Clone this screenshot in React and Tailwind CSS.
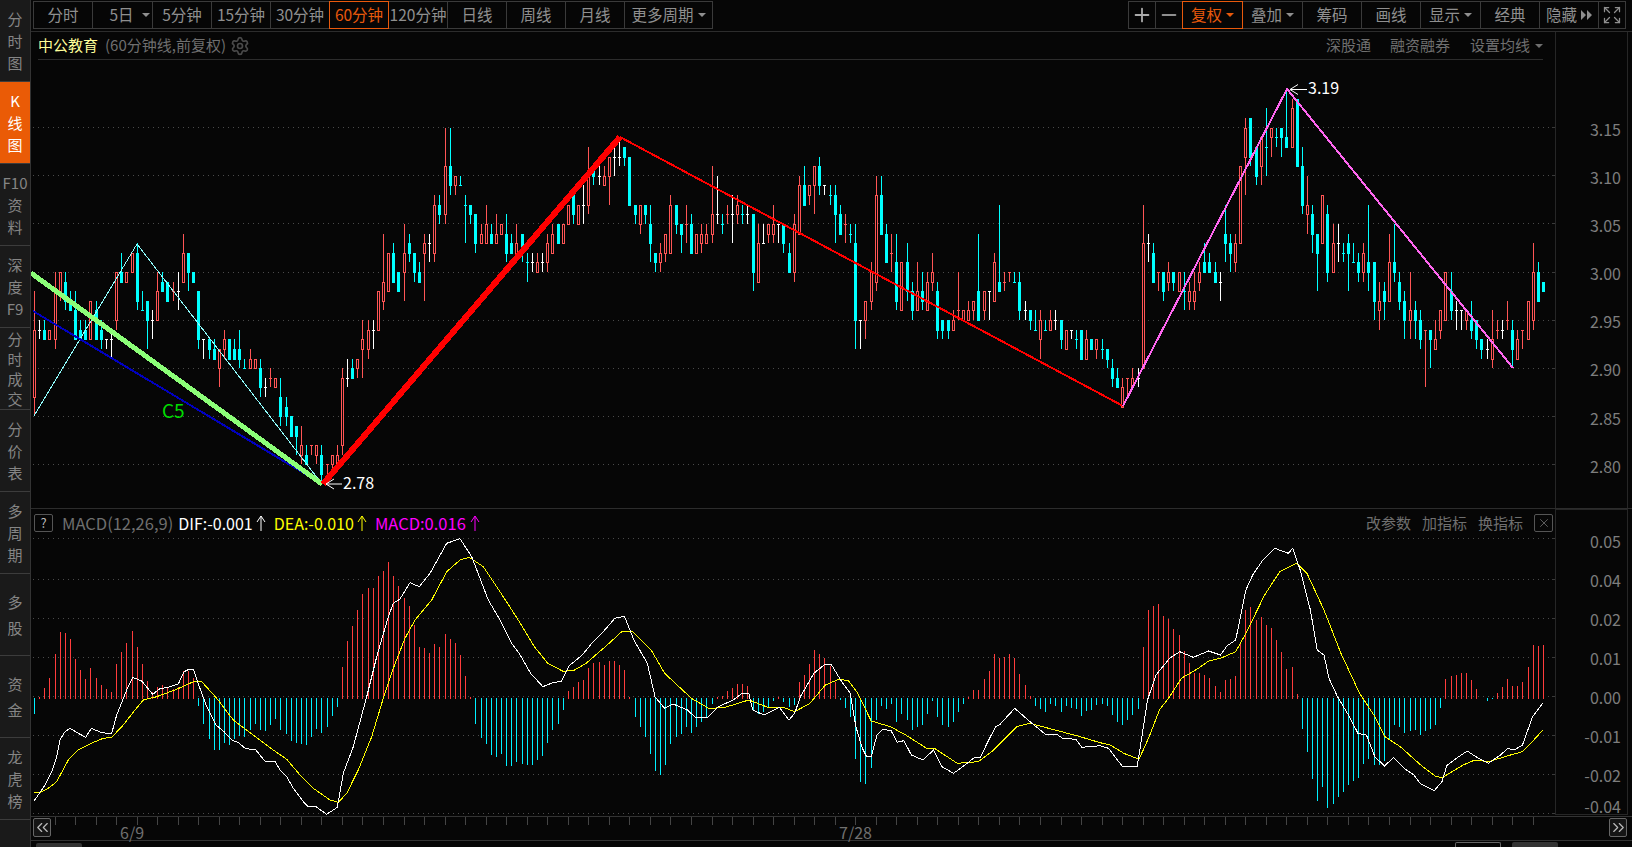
import React from "react";
import { Plus, Minus, Settings, Expand, ChevronsLeft, ChevronsRight, X } from "lucide-react";

const CANDLES = `r298,294,287,285 w295,294,294,293 c295,294,293,293 r294,294,293,293 r300,298,293,292 r300,300,298,297 c300,299,297,296 c298,297,296,296 c298,296,293,293 c295,294,293,293
c295,294,293,293 r297,297,293,293 c297,296,293,293 c295,294,293,292 w293,293,293,292 w294,293,293,291 r300,300,295,294 c302,300,299,299 r300,300,299,299 r302,302,300,300
c303,302,297,296 c298,296,296,296 c297,297,295,292 w296,295,295,293 r300,298,295,295 c300,299,298,298 c299,299,297,297 r299,298,298,297 w300,298,298,296 r304,302,299,299
c302,302,300,298 c300,300,299,299 c298,298,293,292 w293,293,293,291 c293,293,292,291 c293,292,291,291 r292,292,290,288 r294,293,292,291 c293,293,291,291 c293,292,291,291
c294,292,291,290 c291,290,290,290 r292,291,290,290 r291,291,290,290 c291,290,288,287 w289,288,288,287 r290,289,289,288 r289,289,288,288 c289,287,285,284 c287,286,285,284
c285,285,283,283 c284,284,283,281 r284,282,281,280 c282,281,280,280 r282,282,282,281 r282,282,281,280 c282,281,279,278 r280,280,280,279 r281,281,280,279 r282,281,280,280
r290,289,282,281 w291,289,289,288 c291,290,289,289 r291,291,290,289 r295,293,292,289 r295,294,292,291 w295,294,294,292 r298,298,294,294 r304,299,297,296 r302,302,298,298
c303,302,299,299 c300,300,298,298 r305,302,300,297 c304,303,302,301 c302,302,300,299 c301,300,299,299 r304,303,302,297 w304,303,303,301 r308,307,302,301 c308,307,306,305
r315,311,306,305 c315,311,309,308 r310,310,309,308 c310,309,309,309 c308,307,307,303 c307,307,306,305 c306,306,303,302 r305,304,303,303 r307,305,303,303 c305,304,303,303
r306,304,303,303 r305,305,304,304 c306,304,302,301 c304,303,302,302 r305,303,302,301 c304,304,302,301 c302,301,301,299 w302,301,301,300 r302,301,300,300 w302,301,301,300
r304,303,301,300 r305,304,302,302 c305,305,303,303 r305,305,303,303 r307,307,305,305 c308,308,306,305 r307,307,305,305 w309,307,307,305 r313,310,307,306 c311,311,310,309
w311,310,310,309 r311,310,309,309 r312,312,310,307 w313,312,312,310 w314,312,312,311 c313,313,312,311 c312,312,307,307 c307,307,306,305 r307,307,305,304 c307,307,306,305
c307,305,303,301 c302,302,301,300 r303,302,301,300 r304,304,302,301 r308,307,302,302 c307,307,305,304 c305,305,304,302 r307,305,305,303 c306,305,302,302 r304,304,302,302
r305,304,303,302 r305,304,303,303 r311,306,304,303 w310,306,306,305 c306,305,305,304 r307,306,306,305 w308,306,306,303 r308,307,306,305 c307,306,306,305 w307,306,306,305
c306,306,300,298 r305,303,299,299 w305,303,303,303 r305,305,304,303 r307,305,304,303 w305,305,305,303 c305,305,303,302 c303,302,300,300 r306,305,300,299 r310,309,304,304
c311,309,307,307 r309,309,308,307 r311,311,309,306 c312,311,309,308 w309,309,309,308 c309,308,308,307 c309,308,306,303 c307,306,304,304 r306,305,305,303 c305,304,304,303
c305,303,295,292 w295,295,295,292 r297,297,295,293 r301,300,297,296 r310,308,299,298 c310,308,304,304 c305,304,301,301 r304,302,302,300 c304,301,297,296 r301,301,296,296
c303,301,298,297 c299,298,296,295 r301,298,296,296 c300,298,297,296 r300,299,296,296 r302,300,299,298 c299,298,294,293 c295,295,294,293 c295,295,294,293 r296,295,294,294
r300,296,296,295 r296,296,295,295 r297,296,295,295 r297,297,296,295 c304,298,295,295 r298,298,296,295 w298,298,298,295 r302,301,297,297 c307,299,298,298 r300,299,299,298
r300,300,300,299 c300,299,299,299 c300,299,296,295 w297,296,296,295 c296,296,295,294 c296,294,294,294 r296,295,293,291 c295,294,294,294 r296,295,294,294 w296,295,295,294
c295,295,293,292 r294,294,292,292 w294,294,294,293 c294,293,293,292 c294,294,291,291 r294,293,291,291 c293,293,292,292 r293,293,292,291 c293,292,292,291 c292,292,291,290
c291,290,289,288 c290,289,288,288 r289,288,286,286 r289,289,289,287 r290,289,288,288 w290,289,289,288 r307,303,290,290 w304,303,303,301 c303,302,299,299 r300,300,300,298
c300,300,298,297 r301,300,299,298 c300,300,299,298 r300,300,298,298 c300,298,298,296 r299,298,297,296 r300,298,297,296 r301,300,299,298 c303,301,300,300 c302,301,300,300
c301,300,299,299 w300,299,299,297 c307,304,303,301 c304,303,302,300 r304,303,301,300 r311,311,303,303 r316,315,312,308 c316,316,312,311 c313,313,310,309 r314,314,311,309
c317,313,313,310 r315,315,314,312 c315,314,314,313 c315,315,314,312 c319,314,313,313 r318,317,313,313 c318,318,311,311 c313,311,307,306 r310,307,306,304 c307,306,304,302
c304,304,302,298 r308,308,303,303 c307,306,300,299 r305,303,300,300 w305,303,303,301 c303,302,302,301 c304,303,302,298 c303,301,301,301 c302,301,300,299 r303,302,300,299
c307,301,300,298 c301,301,297,295 r299,297,296,294 c299,298,297,295 r304,301,297,297 c305,301,300,299 c300,299,297,296 c298,297,295,293 r300,296,295,293 c297,296,295,293
c296,295,293,292 r294,294,294,288 c294,294,293,290 r295,293,292,292 r296,296,294,293 r300,300,295,295 c300,298,296,295 w297,296,296,294 w296,296,296,294 r296,296,295,294
c297,295,294,293 c295,295,293,292 c293,293,292,291 w293,292,292,291 r296,293,291,290 r295,294,294,293 w295,294,294,293 r297,295,295,294 c295,294,292,290 r294,293,291,291
r294,294,294,292 r297,297,293,293 r303,300,295,294 c301,300,297,297 c299,299,298,298`;

const HIST = [-16,1,10,20,44,66,65,59,39,28,19,30,20,13,9,6,34,46,55,67,51,34,17,6,11,13,11,9,11,27,27,20,
-8,-26,-41,-52,-52,-45,-47,-41,-38,-39,-32,-26,-32,-33,-27,-21,-32,-36,-43,-45,-46,-47,-39,-31,-35,-29,-18,-9,
31,57,72,88,104,110,110,122,127,136,122,112,100,92,73,51,50,45,54,51,64,59,55,43,22,1,
-26,-40,-46,-57,-59,-56,-68,-68,-64,-66,-67,-67,-62,-58,-45,-32,-26,-12,
7,11,16,18,30,35,36,33,37,37,33,28,1,
-19,-29,-39,-56,-73,-77,-67,-46,-39,-36,-29,-35,-29,-24,-19,-6,
1,2,7,10,14,14,12,-12,-16,-14,-10,-3,1,-4,-9,-7,16,23,34,48,44,40,32,16,-2,
-10,-19,-61,-84,-86,-70,-22,-8,-11,-6,-24,-16,-22,-32,-29,-27,-16,-3,-19,-27,-29,-24,-14,-6,1,8,8,19,27,44,40,41,44,40,24,13,2,
-8,-11,-14,-6,-8,-14,-8,-10,-11,-18,-13,-12,-7,-6,-8,-17,-24,-27,-22,-17,-11,
51,88,92,94,82,79,69,63,47,35,25,25,23,20,12,6,18,19,22,54,88,91,78,81,73,70,58,46,29,31,4,
-31,-54,-81,-103,-89,-110,-106,-99,-94,-87,-83,-80,-66,-61,-67,-67,-63,-41,-27,-29,-35,-33,-32,-37,-33,-31,-27,-10,
19,22,23,25,25,18,9,0,-3,-1,5,11,19,12,12,16,31,53,52,53];

const z4 = (a) => a.map(([x, y]) => [x / 3, 600 + y / 3]);
const z3 = (a) => a.map(([x, y]) => [x / 3, 300 + y / 3]);
const z7 = (a) => a.map(([x, y]) => [500 + x / 2.613, 500 + y / 3]);
const z5 = (a) => a.map(([x, y]) => [1100 + x / 2.947, 500 + y / 3]);

const DIF = [
  ...z4([[103,602],[135,555],[155,515],[170,470],[180,420],[195,395],[210,385],[235,400],[257,412],[274,385],[300,396],[320,400],[335,400],[350,345],[380,270],[398,232],[425,243],[458,283],[480,266],[505,262],[535,252],[552,215],[567,208],[580,208],[596,255],[620,320],[648,375],[672,395],[695,420],[715,428],[737,446],[767,449],[795,484],[825,484],[840,510],[860,530],[880,565],[910,605],[925,620],[948,620],[980,643],[1012,622],[1030,520],[1060,440],[1100,290],[1130,170],[1165,50],[1180,10]]),
  ...z3([[1200,897],[1230,848],[1258,860],[1290,820],[1340,730],[1380,716],[1415,770],[1465,900]]),
  ...z4([[1500,60]]),
  ...z7([[30,430],[50,460],[80,520],[112,560],[140,547],[160,545],[180,498],[215,465],[240,430],[270,395],[300,355],[325,349],[350,420],[385,490],[405,590],[430,625],[452,612],[490,630],[510,652],[543,652],[570,620],[610,600],[630,582],[650,580],[660,630],[690,645],[730,622],[755,660],[770,640],[785,590],[820,520],[850,492],[865,492],[890,540],[915,580],[930,680],[945,740],[958,770],[970,770],[985,705],[1000,688],[1022,692],[1038,727],[1055,722],[1075,765],[1105,780],[1133,750],[1155,800],[1185,820],[1215,795],[1240,772],[1255,772],[1275,725],[1295,680],[1305,675],[1345,625],[1385,665],[1425,703],[1455,703],[1470,715],[1505,718],[1520,742],[1568,737]]),
  ...z5([[25,745],[65,798],[110,798],[125,700],[140,600],[165,525],[185,500],[205,475],[235,455],[275,472],[320,453],[355,465],[375,437],[400,420],[430,270],[450,225],[480,180],[515,145],[555,160],[568,145],[590,210],[620,330],[640,450],[660,465],[675,535],[700,590],[735,650],[760,700],[785,705],[810,770],[838,798],[865,773],[900,808],[925,825],[945,852],[985,872],[1008,845],[1022,797],[1050,775],[1082,753],[1115,775],[1145,790],[1180,765],[1202,745],[1220,750],[1245,735],[1275,650],[1305,610]]),
];
const DEA = [
  ...z4([[103,578],[120,578],[145,565],[170,545],[205,480],[235,450],[285,425],[310,415],[335,412],[370,375],[405,330],[430,300],[470,290],[530,268],[585,243],[605,245],[650,295],[700,360],[760,405],[820,450],[860,478],[900,525],[940,565],[990,600],[1015,607],[1040,580],[1075,510],[1115,410],[1150,295],[1180,205],[1215,115],[1245,60],[1295,0]]),
  ...z3([[1340,815],[1380,780],[1408,772],[1450,800]]),
  ...z7([[0,275],[45,355],[90,440],[125,490],[165,514],[195,510],[225,490],[280,435],[320,393],[345,393],[395,450],[430,520],[500,595],[545,625],[585,623],[650,600],[700,622],[740,622],[770,635],[810,610],[850,555],[885,538],[910,542],[935,580],[970,663],[1020,680],[1060,705],[1115,745],[1135,745],[1195,790],[1250,785],[1290,750],[1350,680],[1385,670],[1450,690],[1510,708],[1568,728]]),
  ...z5([[30,735],[70,760],[115,778],[145,710],[175,630],[205,590],[240,535],[290,505],[320,483],[355,475],[400,455],[430,400],[485,285],[530,215],[580,190],[610,220],[660,330],[710,460],[765,580],[810,650],[840,710],[885,740],[945,795],[990,830],[1010,832],[1070,795],[1105,780],[1145,785],[1210,765],[1245,755],[1270,730],[1305,690]]),
];

const pts = (a) => a.map(([x, y]) => `${x.toFixed(1)},${y.toFixed(1)}`).join(" ");
const py = (c) => Math.round(272 - (c - 300) * 9.62);
const list = CANDLES.trim().split(/\s+/);
const cx = (i, n) => Math.round(34 + (i * 1509) / (n - 1));

function Candles() {
  return (
    <g shapeRendering="crispEdges">
      {list.map((s, i) => {
        const t = s[0];
        const [hi, top, bot, lo] = s.slice(1).split(",").map(Number);
        const x = cx(i, list.length);
        const col = t === "r" ? "#ff5555" : t === "c" ? "#00ffff" : "#ffffff";
        const yt = py(top), yb = py(bot);
        const wick = <rect x={x} y={py(hi)} width="1" height={Math.max(py(lo) - py(hi), 1)} fill={col} />;
        if (top === bot) return <g key={i}>{wick}<rect x={x - 1} y={yt} width="3" height="1" fill={col} /></g>;
        if (t === "r") return (
          <g key={i}>
            {wick}
            <rect x={x - 0.5} y={yt + 0.5} width="2" height={yb - yt} fill="#060606" stroke={col} strokeWidth="1" />
          </g>
        );
        return <g key={i}>{wick}<rect x={x - 1} y={yt} width="3" height={yb - yt + 1} fill={col} /></g>;
      })}
    </g>
  );
}

function Grid({ ys }) {
  return (
    <g>
      {ys.map((y) => (
        <g key={y} shapeRendering="crispEdges">
          <line x1="33" x2="1552" y1={y + 0.5} y2={y + 0.5} stroke="#4a4a4a" strokeDasharray="1 4" />
          <line x1="1552" x2="1555" y1={y + 0.5} y2={y + 0.5} stroke="#3a3a3a" />
        </g>
      ))}
    </g>
  );
}

function Arrow({ x1, x2, y }) {
  return (
    <g stroke="#fff" strokeWidth="1" fill="none">
      <path d={`M${x2} ${y}H${x1}M${x1 + 8} ${y - 5}L${x1} ${y}L${x1 + 8} ${y + 5}`} />
    </g>
  );
}

function MainChart() {
  return (
    <svg viewBox="31 60 1524 448" className="block w-[1524px] h-[448px]">
      <Grid ys={[127, 175, 223, 272, 320, 368, 416, 464]} />
      <Candles />
      <g shapeRendering="crispEdges" fill="none">
        <polyline points="34,416 137,244 322,484" stroke="#8ffcfc" strokeWidth="1" />
        <line x1="33" y1="311" x2="322" y2="484" stroke="#0000c0" strokeWidth="2" />
        <line x1="31" y1="273" x2="322" y2="484" stroke="#8cff78" strokeWidth="5" />
        <line x1="323" y1="484" x2="620" y2="137" stroke="#ff0000" strokeWidth="6" />
        <line x1="620" y1="137" x2="1123" y2="406" stroke="#ff0000" strokeWidth="2" />
        <polyline points="1123,406 1287,89 1513,368" stroke="#ff66f0" strokeWidth="2" />
      </g>
      <Arrow x1={1290} x2={1307} y={89.5} />
      <text x="1308" y="94" fill="#fff" className="text-[16px]">3.19</text>
      <Arrow x1={326} x2={342} y={484} />
      <text x="343" y="489" fill="#fff" className="text-[16px]">2.78</text>
      <text x="162" y="418" fill="#00dd00" className="text-[19px]">C5</text>
    </svg>
  );
}

function MacdChart() {
  return (
    <svg viewBox="31 534 1524 282" className="block w-[1524px] h-[282px]">
      <Grid ys={[538, 579, 618, 657, 696, 735, 774, 813]} />
      <g shapeRendering="crispEdges">
        {HIST.map((h, i) => {
          if (h === 0) return null;
          const x = cx(i, HIST.length);
          return h > 0
            ? <rect key={i} x={x} y={698 - h} width="1" height={h + 1} fill="#ff3c3c" />
            : <rect key={i} x={x} y={698} width="1" height={-h} fill="#00f0ff" />;
        })}
        <polyline points={pts(DEA)} fill="none" stroke="#ffff00" strokeWidth="1" />
        <polyline points={pts(DIF)} fill="none" stroke="#ffffff" strokeWidth="1" />
      </g>
    </svg>
  );
}

const Caret = ({ className = "" }) => (
  <svg width="8" height="4" viewBox="0 0 8 4" className={`shrink-0 fill-current ${className}`}><path d="M0 0H8L4 4Z" /></svg>
);

const UpArrow = ({ className }) => (
  <svg width="10" height="16" viewBox="0 0 10 16" fill="none" stroke="currentColor" className={className}><path d="M5 16V1M1 7L5 1L9 7" /></svg>
);

const side = [
  { c: ["分", "时", "图"], l: "leading-[22px]" },
  { c: ["K", "线", "图"], l: "leading-[22px]", on: true },
  { c: ["F10", "资", "料"], l: "leading-[22px]" },
  { c: ["深", "度", "F9"], l: "leading-[22px]" },
  { c: ["分", "时", "成", "交"], l: "leading-[20px]" },
  { c: ["分", "价", "表"], l: "leading-[22px]" },
  { c: ["多", "周", "期"], l: "leading-[22px]" },
  { c: ["多", "股"], l: "leading-[26px]" },
  { c: ["资", "金"], l: "leading-[26px]" },
  { c: ["龙", "虎", "榜"], l: "leading-[22px]" },
];

function Sidebar() {
  return (
    <aside className="w-[31px] shrink-0 h-full bg-[#1a1a1a] border-r border-[#333]">
      {side.map((s, i) => (
        <div
          key={i}
          className={`h-[82px] flex flex-col items-center justify-center border-b border-[#3c3c3c] text-[15px] ${s.l} ${s.on ? "bg-[#ea5b06] text-white" : "text-[#858585]"}`}
        >
          {s.c.map((t, j) => <span key={j}>{t}</span>)}
        </div>
      ))}
    </aside>
  );
}

const Cell = ({ w, on, className = "", children }) => (
  <div className={`${w} h-[28px] -ml-px first:ml-0 flex items-center justify-center gap-[4px] border text-[15.5px] whitespace-nowrap ${on ? "relative border-[#e8590c] text-[#e8590c]" : "border-[#3a3a3a] text-[#8f8f8f]"} ${className}`}>
    {children}
  </div>
);

function Toolbar() {
  return (
    <div className="h-[32px] shrink-0 flex justify-between pl-[2px] pr-[6px] pt-[1px] border-b border-[#2c2c2c]">
      <div className="flex">
        <Cell w="w-[60px]">分时</Cell>
        <Cell w="w-[61px]" className="pl-[14px]">5日<Caret className="ml-[4px]" /></Cell>
        <Cell w="w-[60px]">5分钟</Cell>
        <Cell w="w-[60px]">15分钟</Cell>
        <Cell w="w-[60px]">30分钟</Cell>
        <Cell w="w-[60px]" on>60分钟</Cell>
        <Cell w="w-[60px]">120分钟</Cell>
        <Cell w="w-[60px]">日线</Cell>
        <Cell w="w-[60px]">周线</Cell>
        <Cell w="w-[60px]">月线</Cell>
        <Cell w="w-[89px]">更多周期<Caret /></Cell>
      </div>
      <div className="flex">
        <Cell w="w-[28px]"><Plus size={22} strokeWidth={2} className="shrink-0 text-[#aaa]" /></Cell>
        <Cell w="w-[28px]"><Minus size={22} strokeWidth={2} className="shrink-0" /></Cell>
        <Cell w="w-[61px]" on>复权<Caret className="text-[#e8590c]" /></Cell>
        <Cell w="w-[61px]">叠加<Caret /></Cell>
        <Cell w="w-[60px]">筹码</Cell>
        <Cell w="w-[60px]">画线</Cell>
        <Cell w="w-[61px]">显示<Caret /></Cell>
        <Cell w="w-[60px]">经典</Cell>
        <Cell w="w-[60px]">
          隐藏
          <svg width="11" height="10" viewBox="0 0 11 10" className="fill-current"><path d="M0 0L5 5L0 10ZM6 0L11 5L6 10Z" /></svg>
        </Cell>
        <Cell w="w-[28px]"><Expand size={20} strokeWidth={1.5} className="shrink-0" /></Cell>
      </div>
    </div>
  );
}

function MainPanel() {
  return (
    <div className="h-[477px] shrink-0 flex border-b border-[#2c2c2c]">
      <div className="w-[1524px] shrink-0">
        <div className="h-[28px] ml-[7px] mr-[12px] flex items-center border-b border-[#2c2c2c] text-[15px] text-[#6f6f6f]">
          <span className="text-[#ffff9a]">中公教育</span>
          <span className="ml-[7px]">(60分钟线,前复权)</span>
          <Settings size={20} strokeWidth={2} className="ml-[4px] text-[#4a4a4a]" />
          <span className="ml-auto">深股通</span>
          <span className="ml-[19px]">融资融券</span>
          <span className="ml-[20px]">设置均线</span>
          <Caret className="ml-[5px]" />
        </div>
        <MainChart />
      </div>
      <div className="w-[73px] shrink-0 border-l border-r border-[#262626] pt-[73px] pr-[6px] text-right text-[16px] text-[#7d7d7d]">
        {["3.15", "3.10", "3.05", "3.00", "2.95", "2.90", "2.85", "2.80"].map((t) => (
          <div key={t} className="h-[48.1px] leading-[48px]">{t}</div>
        ))}
      </div>
    </div>
  );
}

function MacdPanel() {
  return (
    <div className="h-[307px] shrink-0 flex">
      <div className="w-[1524px] shrink-0">
        <div className="h-[25px] flex items-center pt-[3px] text-[16px] pl-[3px] pr-[2px] text-[#6f6f6f]">
          <span className="w-[19px] h-[18px] flex items-center justify-center border border-[#555] rounded-[2px] text-[13px] text-[#bbb]">?</span>
          <span className="ml-[9px] text-[16.5px]">MACD(12,26,9)</span>
          <span className="ml-[5px] text-white">DIF:-0.001</span>
          <UpArrow className="ml-[3px] text-white" />
          <span className="ml-[8px] text-[#ffff00]">DEA:-0.010</span>
          <UpArrow className="ml-[3px] text-[#ffff00]" />
          <span className="ml-[8px] text-[16.5px] text-[#ff00ff]">MACD:0.016</span>
          <UpArrow className="ml-[4px] text-[#ff00ff]" />
          <span className="ml-auto text-[15px]">改参数</span>
          <span className="ml-[11px] text-[15px]">加指标</span>
          <span className="ml-[11px] text-[15px]">换指标</span>
          <span className="ml-[11px] w-[19px] h-[18px] flex items-center justify-center border border-[#555] rounded-[2px]"><X size={14} strokeWidth={1} className="text-[#999]" /></span>
        </div>
        <MacdChart />
      </div>
      <div className="w-[73px] h-[306px] shrink-0 border border-[#262626] pt-[12px] pr-[6px] text-right text-[16px] text-[#7d7d7d]">
        {["0.05", "0.04", "0.02", "0.01", "0.00", "-0.01", "-0.02"].map((t) => (
          <div key={t} className="h-[39px] leading-[39px]">{t}</div>
        ))}
        <div className="-mt-[2px] h-[26px] leading-[26px]">-0.04</div>
      </div>
    </div>
  );
}

function Ticks() {
  const n = HIST.length;
  const t = [];
  for (let i = 4; i < n; i += 4) t.push(cx(i, n));
  return (
    <svg viewBox="31 817 1601 9" className="absolute left-0 top-0 w-[1601px] h-[9px]">
      <g shapeRendering="crispEdges" fill="#444">
        {t.map((x) => <rect key={x} x={x} y="817" width="1" height="8" />)}
      </g>
    </svg>
  );
}

function BottomBar() {
  const Btn = ({ children, className = "" }) => (
    <span className={`relative w-[18px] h-[19px] flex items-center justify-center border border-[#666] rounded-[2px] bg-[#151515] text-[#bbb] ${className}`}>{children}</span>
  );
  return (
    <div className="relative h-[25px] shrink-0 flex items-center pl-[2px] pr-[5px] pb-[3px] border-t border-b border-[#333] text-[16px] text-[#707070]">
      <Ticks />
      <Btn><ChevronsLeft size={19} strokeWidth={1.5} className="shrink-0" /></Btn>
      <span className="ml-[69px] pt-[10px] leading-none">6/9</span>
      <span className="ml-[695px] pt-[10px] leading-none">7/28</span>
      <Btn className="ml-auto"><ChevronsRight size={19} strokeWidth={1.5} className="shrink-0" /></Btn>
    </div>
  );
}

function ScrollBar() {
  return (
    <div className="flex-1 flex items-end">
      <div className="ml-[5px] w-[46px] h-[4px] bg-[#333] rounded-t-[2px]" />
      <div className="ml-auto w-[46px] h-[5px] border-t border-l border-r border-[#666] rounded-t-[2px]" />
      <div className="ml-[11px] mr-[74px] w-[46px] h-[5px] bg-[#333] rounded-t-[2px]" />
    </div>
  );
}

export default function App() {
  return (
    <div className="flex w-[1632px] h-[847px] overflow-hidden bg-[#060606] font-['Noto_Sans_CJK_SC','Liberation_Sans',sans-serif]">
      <Sidebar />
      <main className="w-[1601px] h-full flex flex-col">
        <Toolbar />
        <MainPanel />
        <MacdPanel />
        <BottomBar />
        <ScrollBar />
      </main>
    </div>
  );
}
